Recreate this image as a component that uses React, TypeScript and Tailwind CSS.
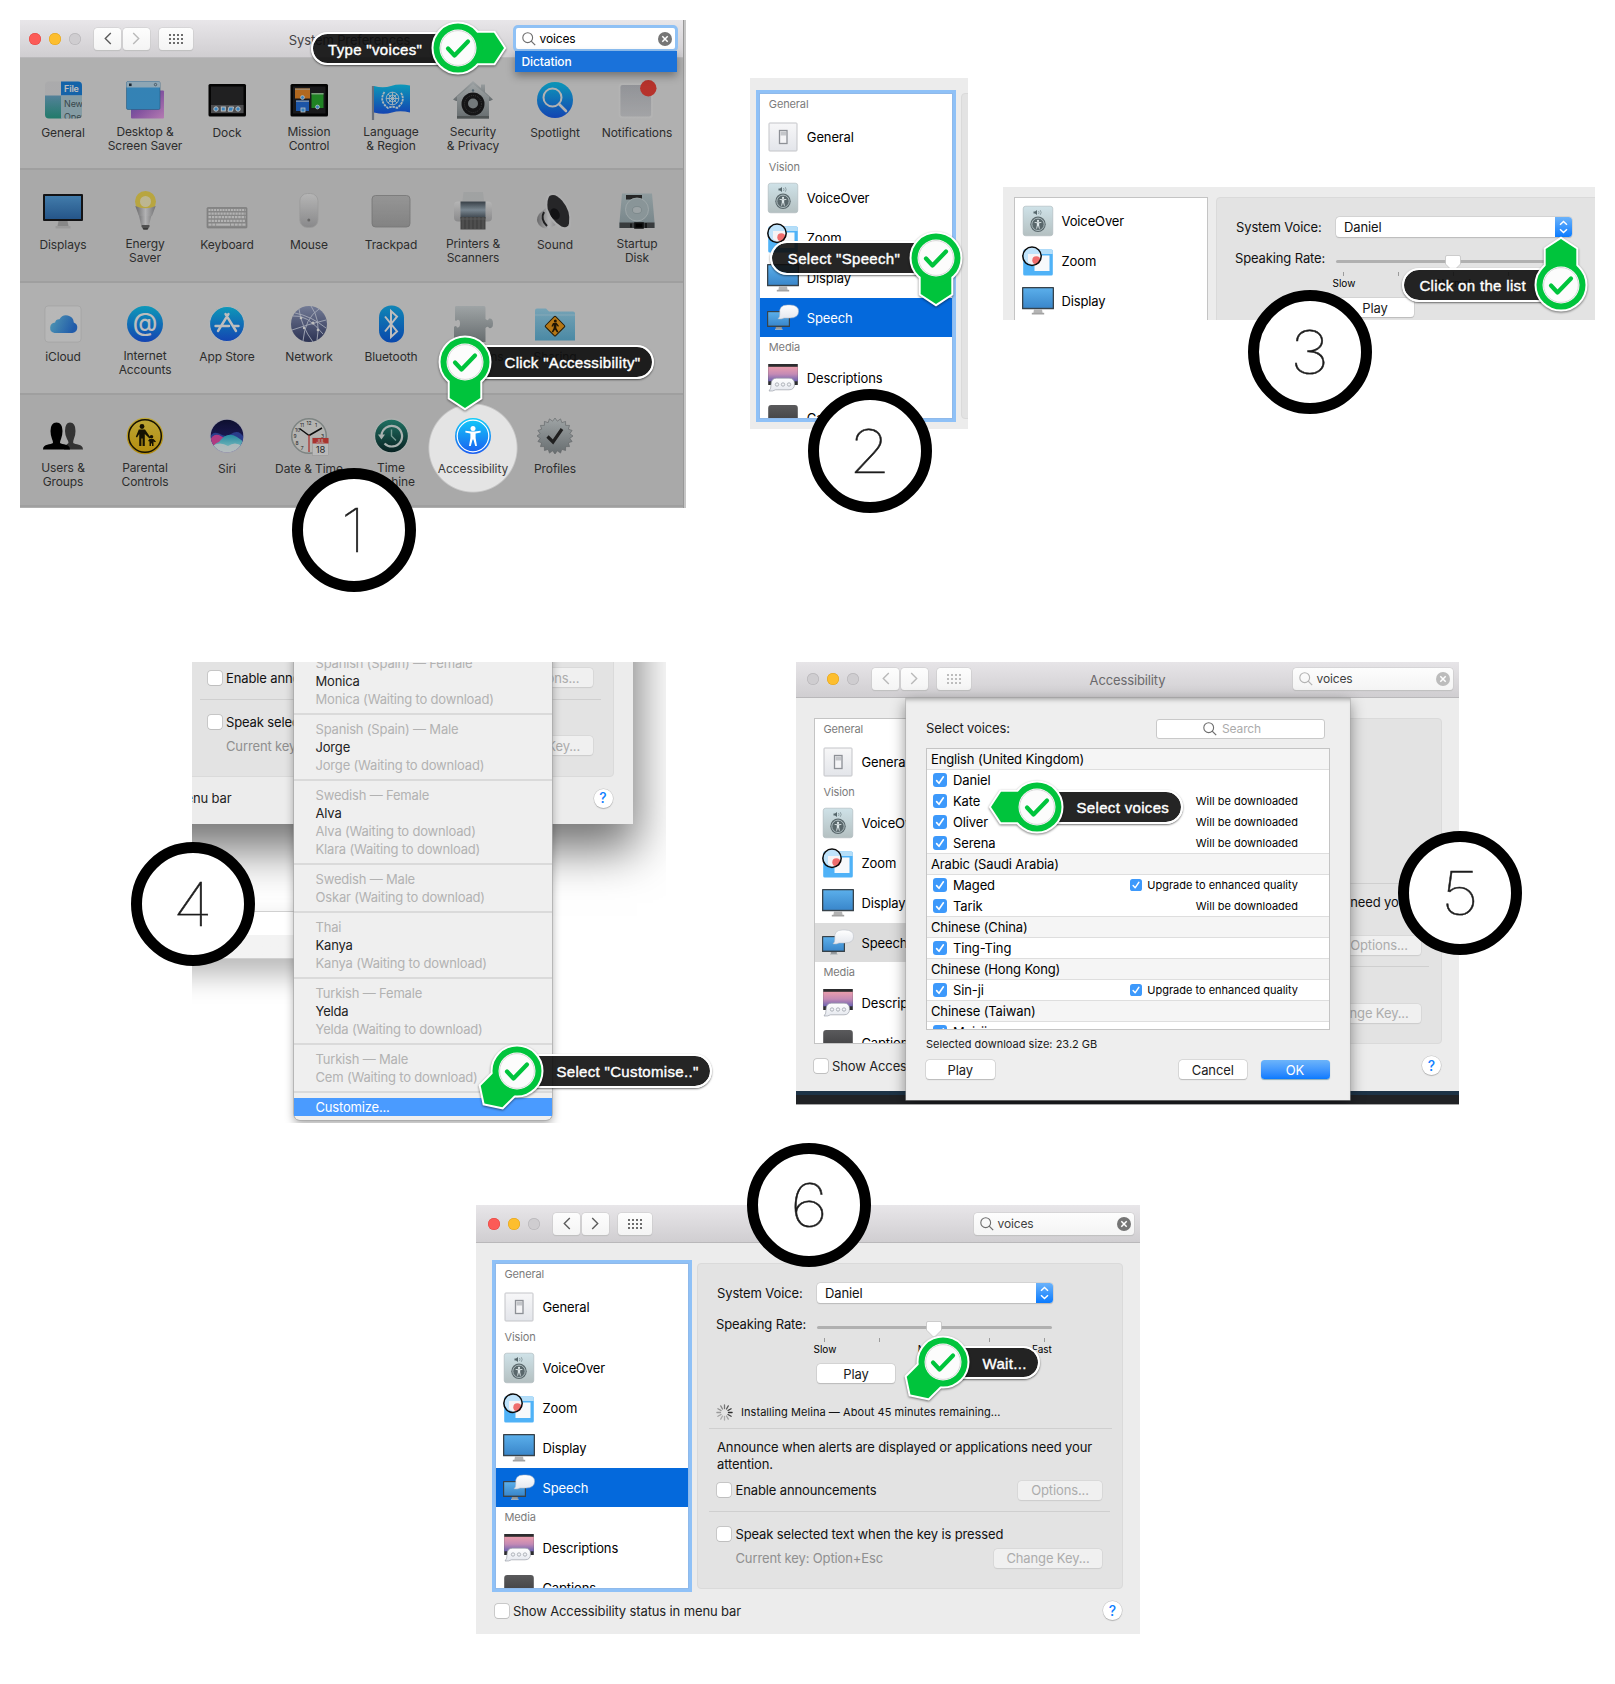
import React from "react";
import type { ReactNode } from "react";

/* ------------------------------------------------------------------ */
/* Shared gradients                                                    */
/* ------------------------------------------------------------------ */

function Grad({ id, stops, x2 = 0, y2 = 1 }: { id: string; stops: string[]; x2?: number; y2?: number }) {
  return (
    <linearGradient id={id} x1="0" y1="0" x2={x2} y2={y2}>
      {stops.map((s, i) => (
        <stop key={i} offset={i / (stops.length - 1)} stopColor={s} />
      ))}
    </linearGradient>
  );
}

function Defs() {
  return (
    <svg width="0" height="0" className="absolute">
      <defs>
        <Grad id="screen" stops={["#5aaeea", "#3a87cb"]} />
        <Grad id="screenDark" stops={["#58a6e6", "#3273b8"]} />
        <Grad id="switch" stops={["#f7f7f8", "#e3e5ea"]} />
        <Grad id="vo" stops={["#cfe2e8", "#b4c0c1"]} />
        <Grad id="sky" stops={["#a9dcfb", "#3fa9f5"]} />
        <Grad id="sunset" stops={["#ea9dac", "#c58bb5", "#6b62b0"]} />
        <Grad id="bubble" stops={["#ffffff", "#e4e7ee"]} />
        <Grad id="cap" stops={["#5a5a5c", "#333335"]} />
        <Grad id="aqua" stops={["#12cdf9", "#1a5cf0"]} />
        <Grad id="blue" stops={["#16b4f5", "#0d61e8"]} />
        <Grad id="teal" stops={["#71aecf", "#2aa58c"]} />
        <Grad id="purple" stops={["#5a63c9", "#b06fd6", "#f3a6f0"]} x2={1} />
        <Grad id="steel" stops={["#d6dddf", "#8b9396"]} />
        <Grad id="silver" stops={["#f4f4f4", "#b9b9bb"]} />
        <Grad id="metal" stops={["#8d8d8f", "#f0f0f2", "#9b9b9d"]} x2={1} y2={0} />
        <Grad id="printer" stops={["#4b5660", "#a3b4c2", "#4b5660"]} />
        <Grad id="disk" stops={["#c1d2d6", "#9fb2b8"]} />
        <Grad id="cloud" stops={["#6fd0f2", "#2c7be5"]} x2={1} y2={0.3} />
        <Grad id="net" stops={["#9aa5c9", "#3b4470"]} />
        <Grad id="folder" stops={["#9fdcf5", "#64b9de"]} />
        <Grad id="yellow" stops={["#ffe14a", "#f3bd10"]} />
        <Grad id="siri" stops={["#0e1236", "#22206a", "#7a3cc4"]} />
        <Grad id="siriWave" stops={["#31b7d8", "#7fe6f2", "#f4ffff"]} />
        <Grad id="tm" stops={["#2b9a86", "#0b2b2c"]} />
        <Grad id="pad" stops={["#c9c9c9", "#b0b0b0"]} />
        <Grad id="notif" stops={["#c4c6cc", "#dcdde0"]} />
        <Grad id="stepper" stops={["#6cb3fa", "#0a7bff"]} />
      </defs>
    </svg>
  );
}

function Icon({ size = 40, box = 40, children }: { size?: number; box?: number; children: ReactNode }) {
  return (
    <svg width={size} height={size} viewBox={`0 0 ${box} ${box}`} className="block shrink-0 overflow-visible">
      {children}
    </svg>
  );
}

function Person({ fill = "#fff" }: { fill?: string }) {
  return (
    <g fill={fill}>
      <circle cx="0" cy="-7.6" r="2.5" />
      <path d="M-7.6 -5.2 L-1.6 -4.4 H1.6 L7.6 -5.2 V-3.4 L2.6 -2.4 V2 L4 10 H2.2 L0.4 3.4 H-0.4 L-2.2 10 H-4 L-2.6 2 V-2.4 L-7.6 -3.4 Z" />
    </g>
  );
}

/* ------------------------------------------------------------------ */
/* Icons of the System Preferences grid                                */
/* ------------------------------------------------------------------ */

const GeneralIcon = () => (
  <Icon>
    <clipPath id="genClip"><rect x="2" y="1.5" width="37" height="37" rx="4" /></clipPath>
    <g clipPath="url(#genClip)">
      <rect x="2" y="1" width="16.500" height="15" fill="#e6e6e8" />
      <rect x="2" y="15.500" width="16.500" height="24" fill="url(#teal)" />
      <rect x="18" y="1" width="22" height="14.500" fill="#1b86e4" />
      <rect x="18" y="15.500" width="22" height="24" fill="#b3d2dd" />
      <text x="21" y="12.400" fontSize="9" fontFamily="Inter, sans-serif" fontWeight="600" fill="#fff">File</text>
      <text x="21" y="27" fontSize="9" fontFamily="Inter, sans-serif" fill="#4d5f66">New</text>
      <text x="21" y="39.500" fontSize="9" fontFamily="Inter, sans-serif" fill="#4d5f66">Open</text>
    </g>
  </Icon>
);

const DesktopIcon = () => (
  <Icon>
    <rect x="6" y="10.500" width="33" height="28" rx="1" fill="url(#purple)" />
    <rect x="1.500" y="1.500" width="33.500" height="28" rx="1.500" fill="#46b0f4" stroke="#3279ac" strokeWidth=".6" />
    <path d="M1.500 7.500 V3 Q1.500 1.500 3 1.500 H33.500 Q35 1.500 35 3 V7.500 Z" fill="#bfe0f3" />
    <rect x="4" y="3.500" width="2.600" height="2.600" fill="#234" />
    <circle cx="30.500" cy="4.600" r="1.200" fill="none" stroke="#456" strokeWidth=".7" />
  </Icon>
);

const DockIcon = () => (
  <Icon>
    <rect x="1.500" y="4" width="37.500" height="32.500" rx="1.500" fill="#050505" />
    <rect x="4" y="6.500" width="32.500" height="27" fill="#2b2b2c" />
    <rect x="4" y="25" width="32.500" height="8" fill="#68686a" />
    <circle cx="9" cy="29" r="2.200" fill="#4db1ff" stroke="#fff" strokeWidth="1" />
    <rect x="14.300" y="27" width="4" height="4" fill="#4db1ff" stroke="#fff" strokeWidth="1" />
    <path d="M22 27 h4.500 l-1 4.200 h-4.500 Z" fill="#4db1ff" stroke="#fff" strokeWidth="1" />
    <circle cx="31" cy="29" r="2.200" fill="#4db1ff" stroke="#fff" strokeWidth="1" />
  </Icon>
);

const MissionIcon = () => (
  <Icon>
    <rect x="1.500" y="4" width="37.500" height="32.500" rx="1.500" fill="#050505" />
    <rect x="4" y="6.500" width="32.500" height="27" fill="#222224" />
    <rect x="6" y="8.500" width="15" height="10" fill="#ee8c2a" />
    <rect x="6" y="8.500" width="15" height="1.500" fill="#d8b58c" />
    <rect x="22.500" y="13" width="12" height="15" fill="#2bb030" />
    <rect x="22.500" y="13" width="12" height="1.500" fill="#a7d6a9" />
    <rect x="7" y="20.500" width="13" height="10.500" fill="#2572e0" />
    <rect x="7" y="20.500" width="13" height="1.500" fill="#9dbde8" />
    <circle cx="13.500" cy="17.500" r="1.900" fill="#4db1ff" stroke="#fff" strokeWidth=".8" />
    <circle cx="28.500" cy="27" r="1.900" fill="#4db1ff" stroke="#fff" strokeWidth=".8" />
    <rect x="12" y="28" width="4" height="4" fill="#4db1ff" stroke="#fff" strokeWidth=".8" />
  </Icon>
);

const LanguageIcon = () => (
  <Icon>
    <path d="M2 6 V40" stroke="#8d97a8" strokeWidth="2.200" />
    <path d="M3 6 Q12 8.500 20 6 T39 5.500 V32.500 Q29 30 21 32.500 T3 32.500 Z" fill="url(#aqua)" />
    <g fill="none" stroke="#e4f5fc" strokeWidth=".9">
      <circle cx="21.500" cy="18.500" r="6.300" /><circle cx="21.500" cy="18.500" r="3.500" />
      <path d="M15.200 18.500 h12.600 M21.500 12.200 v12.600 M17 14 l9 9 M26 14 l-9 9" />
      <path d="M13.500 12 Q7.500 21 17 28 Q21.500 25.500 26 28 Q35.500 21 29.500 12" strokeWidth="1.800" strokeDasharray="2.500 .8" />
    </g>
  </Icon>
);

const SecurityIcon = () => (
  <Icon>
    <path d="M20 1 L28 8 V4.500 H32 V12 L40 19.500 L37 21 H3 L0 19.500 Z" fill="url(#steel)" />
    <path d="M4 16.500 L20 4 L36 16.500 V38.500 H4 Z" fill="url(#steel)" />
    <rect x="4" y="36" width="32" height="2.500" fill="#6b7172" />
    <circle cx="20" cy="24" r="11.500" fill="#1c1c1e" />
    <circle cx="20" cy="24" r="8.500" fill="none" stroke="#555" strokeWidth="1" strokeDasharray=".8 1.200" />
    <circle cx="20" cy="23.500" r="5" fill="#9ba3a6" />
    <circle cx="20" cy="10.500" r="1.200" fill="#6e8490" />
  </Icon>
);

const SpotlightIcon = () => (
  <Icon>
    <circle cx="20" cy="20" r="18" fill="url(#aqua)" />
    <circle cx="17.500" cy="17.500" r="9" fill="none" stroke="#f0f0f0" strokeWidth="2" />
    <path d="M24 24 L31 31" stroke="#f0f0f0" strokeWidth="2.600" strokeLinecap="round" />
  </Icon>
);

const NotificationsIcon = () => (
  <Icon>
    <rect x="2.500" y="4" width="32.500" height="33.500" rx="3" fill="url(#notif)" stroke="#f2f2f2" strokeWidth="1.800" />
    <circle cx="31.300" cy="8.300" r="8.200" fill="#f6443b" />
  </Icon>
);

const DisplaysIcon = () => (
  <Icon>
    <rect x="0" y="2" width="40" height="27" rx="1" fill="#1a1a1c" />
    <rect x="2" y="4" width="36" height="23" fill="url(#screenDark)" />
    <path d="M15.500 29 H24.500 L25.500 34 H14.500 Z" fill="#b6b6b6" />
    <rect x="12.500" y="34" width="15" height="2.500" fill="#d0d0d0" />
  </Icon>
);

const EnergyIcon = () => (
  <Icon>
    <path d="M12 14 L16 33 H24 L29 14 Z" fill="url(#metal)" />
    <circle cx="20.500" cy="9.500" r="10.500" fill="#f8df56" />
    <circle cx="20.500" cy="9.500" r="5.500" fill="#fff6c4" />
    <path d="M10.300 14 Q20.500 18.500 30.700 14 L27 24 H14 Z" fill="url(#metal)" />
    <rect x="16.500" y="33" width="8" height="2.200" fill="#6d6d6d" />
    <path d="M17 35.200 h7 l-1.500 2.600 h-4 Z" fill="#4c4c4c" />
  </Icon>
);

const KeyboardIcon = () => (
  <Icon>
    <rect x="0" y="15.500" width="40" height="20.500" rx="1" fill="#b5b5b5" stroke="#a0a0a0" strokeWidth=".6" />
    <g stroke="#f2f2f2" strokeWidth="2.200">
      <path d="M1.500 18 H38.500" strokeDasharray="2 .8" />
      <path d="M1.500 21.600 H38.500" strokeDasharray="2.200 .8" />
      <path d="M1.500 25.200 H38.500" strokeDasharray="2.500 .8" />
      <path d="M1.500 28.800 H38.500" strokeDasharray="2.300 .8" />
      <path d="M1.500 32.600 H38.500" strokeDasharray="3 .8 3 .8 14 .8 3 .8" />
    </g>
  </Icon>
);

const MouseIcon = () => (
  <Icon>
    <rect x="10.800" y="1.500" width="18.200" height="34" rx="7.500" fill="url(#silver)" stroke="#cfcfcf" strokeWidth=".8" />
    <circle cx="19.800" cy="28" r="1.500" fill="#8a8a8a" />
  </Icon>
);

const TrackpadIcon = () => (
  <Icon>
    <rect x="1" y="3.500" width="38" height="31.500" rx="3.500" fill="url(#pad)" stroke="#9c9c9c" strokeWidth=".8" />
  </Icon>
);

const PrintersIcon = () => (
  <Icon>
    <path d="M10.500 0 H30 L31.500 12 H9 Z" fill="#d8dadb" />
    <rect x="1" y="9.500" width="38" height="20" rx="4" fill="url(#silver)" />
    <rect x="7.500" y="9.500" width="25" height="17" fill="url(#printer)" />
    <rect x="7.500" y="25" width="25" height="12.500" fill="#5c5c5c" />
    <path d="M8 27 H32 M10 25 V37 M14 25 V37 M18 25 V37 M22 25 V37 M26 25 V37 M30 25 V37" stroke="#7d7d7d" strokeWidth=".8" />
  </Icon>
);

const SoundIcon = () => (
  <Icon>
    <path d="M4 22 Q0 28 4 33 Q9 38 15 36 L26 30 L13 14 Z" fill="url(#metal)" />
    <path d="M9 20 Q5 27 12 34" fill="none" stroke="#2b2b2d" strokeWidth="2" />
    <path d="M13 2 Q20 -2 28 7 Q38 19 36 33 Q35 40 27 37 Q16 32 11 18 Q9 7 13 2 Z" fill="#e9e9ea" />
    <path d="M14.500 4 Q20 0.500 27 8.500 Q36 19 34 31.500 Q32.500 37 26.500 34.500 Q17 29 12.700 17 Q11.500 8 14.500 4 Z" fill="#333336" />
    <ellipse cx="20" cy="22" rx="4.500" ry="6" transform="rotate(-28 20 22)" fill="#17171a" />
  </Icon>
);

const DiskIcon = () => (
  <Icon>
    <path d="M5 1.500 H35 L37.500 30 V36 H2.500 V30 Z" fill="url(#disk)" />
    <rect x="2.500" y="30.500" width="35" height="5.500" fill="#4b5052" />
    <rect x="9" y="3" width="16" height="4.500" fill="#333" />
    <circle cx="20" cy="17.500" r="11.500" fill="#b9c9cd" stroke="#dbe6e8" strokeWidth=".8" />
    <ellipse cx="20" cy="18" rx="4.500" ry="3.500" fill="#d2dcdf" stroke="#8fa0a5" strokeWidth=".5" />
    <path d="M14 31.500 v4 M18 31 h8 v5 h-8z M29 31 v5" stroke="#131414" strokeWidth="1.600" />
  </Icon>
);

const ICloudIcon = () => (
  <Icon>
    <rect x="2" y="2" width="36" height="36" rx="3" fill="#f7f7f7" stroke="#cfcfcf" strokeWidth=".5" />
    <path d="M11.500 29 a5.300 5.300 0 0 1 .6 -10.500 a4.200 4.200 0 0 1 4.400 -3.300 a7.700 7.700 0 0 1 14.300 3.200 a5.500 5.500 0 0 1 -1.600 10.600 Z" fill="url(#cloud)" />
  </Icon>
);

const InternetIcon = () => (
  <Icon>
    <circle cx="20" cy="20" r="18" fill="url(#aqua)" />
    <text x="20" y="27.300" textAnchor="middle" fontSize="25" fontFamily="Inter, sans-serif" fontWeight="500" fill="#fff">@</text>
  </Icon>
);

const AppStoreIcon = () => (
  <Icon>
    <circle cx="20" cy="20" r="17.500" fill="url(#aqua)" stroke="#eef3f7" strokeWidth="1.200" />
    <g stroke="#fff" strokeWidth="2.400" strokeLinecap="round">
      <path d="M21.500 10 L11 27 M18.500 10 L29 27 M8.500 22 H22 M26.500 22 H31.500" />
    </g>
  </Icon>
);

const NetworkIcon = () => (
  <Icon>
    <circle cx="20" cy="20" r="18" fill="url(#net)" />
    <g fill="none" stroke="#dfe5f7" strokeWidth=".9">
      <path d="M4 12 Q18 10 34 30 M10 5 Q12 22 24 38 M30 5 Q16 14 14 37 M3 26 Q20 20 37 16 M6 9 Q22 12 37 24 M22 2 Q32 16 28 36" />
    </g>
    <g fill="#fff">
      <circle cx="12" cy="14" r="1.300" /><circle cx="24" cy="19" r="1.500" /><circle cx="15" cy="24" r="1.200" /><circle cx="29" cy="26" r="1.300" />
    </g>
  </Icon>
);

const BluetoothIcon = () => (
  <Icon>
    <rect x="8" y="1.500" width="25" height="37" rx="12" fill="url(#blue)" />
    <path d="M14 12.500 L26 27.500 L20 33 V7 L26 12.500 L14 27.500" fill="none" stroke="#fff" strokeWidth="2" />
  </Icon>
);

const ExtensionsIcon = () => (
  <Icon>
    <path d="M2 3 Q2 2 3.500 2 H31 Q32.500 2 32.500 4 V15 Q35 17.500 36 14.500 Q40 14 40 19.500 Q40 25 36 24 Q35 21.500 32.500 24 V38 H1 V23 Q3 21 4 23.500 Q7 24 7 19.500 Q7 15 4 16 Q3 18 2 16 Z" fill="url(#steel)" />
  </Icon>
);

const SharingIcon = () => (
  <Icon>
    <path d="M0 6.500 Q0 4.500 2 4.500 H11 L14 7.500 H38 Q40 7.500 40 9.500 V36.500 H0 Z" fill="url(#folder)" />
    <path d="M0 11 H40" stroke="#bfe9fa" strokeWidth=".8" />
    <rect x="12.800" y="15" width="14.400" height="14.400" rx="1" transform="rotate(45 20 22.200)" fill="#f5a11c" stroke="#33240a" strokeWidth="1" />
    <g fill="#2a1c05">
      <circle cx="20.300" cy="17" r="1.500" />
      <path d="M18 19 L21.500 18.700 L24 22 L23 22.700 L21.500 21 L21.300 24 L23.500 28 L22 28.500 L20 25.500 L18 28.500 L16.800 27.700 L18.700 24 V21 L17.500 22.800 L16.400 22.200 Z" />
    </g>
  </Icon>
);

const UsersIcon = () => (
  <Icon>
    <path d="M21 33.500 C22 29 24 28.500 25.500 27 Q25.500 25 24 23 Q22 19 22 15 Q22 6.500 27 6.500 Q32.500 6.500 32.500 15 Q32.500 19 31 22.500 Q30 25 30.200 27 C32 29 40 27.500 40 33.500 Z" fill="#454545" />
    <path d="M0 33.500 C0 27.500 8 29 10 27 Q10 25 9 23 Q7.500 19 7.500 15 Q7.500 6.500 13.500 6.500 Q19.500 6.500 19.500 15 Q19.500 19 18 23 Q17 25 17 27 C19 29 27 27.500 27 33.500 Z" fill="#000" />
  </Icon>
);

const ParentalIcon = () => (
  <Icon>
    <circle cx="20" cy="20" r="18.300" fill="url(#yellow)" />
    <circle cx="20" cy="20" r="16.300" fill="none" stroke="#1e1803" strokeWidth="1.500" />
    <g fill="#1e1803">
      <circle cx="17" cy="10.500" r="2.400" />
      <path d="M13.800 13.500 H20 L25.500 21.500 L24.500 22.500 L19.800 18 V30 H17.600 V22.500 H16.400 V30 H14.200 V18 L12 21.500 L10.800 20.700 Z" />
      <circle cx="26.500" cy="20.800" r="1.800" />
      <path d="M24.500 23 H28.500 L31 25.500 L30 26.300 L28.500 25.500 V30 H27 V27.500 H26 V30 H24.500 V25.500 L23 25 Z" />
    </g>
  </Icon>
);

const SiriIcon = () => (
  <Icon>
    <clipPath id="siriClip"><circle cx="20" cy="20" r="16.300" /></clipPath>
    <circle cx="20" cy="20" r="17.300" fill="#dcdcea" />
    <g clipPath="url(#siriClip)">
      <rect width="40" height="40" fill="url(#siri)" />
      <path d="M2 25 Q4 14 12 17.500 Q19 22 24 18 Q33 12 38 24 V30 H2 Z" fill="#3f5fd0" opacity=".8" />
      <path d="M2 27 Q5 17 12 19 Q18 22.500 24 26 Q18 30 2 29 Z" fill="#ef4fae" />
      <path d="M12 26 Q20 14.500 30 21 Q35 24 38 28 L34 34 Q20 42 5 32 Q8 27 12 26 Z" fill="url(#siriWave)" />
      <path d="M5 30 Q13 25 21 30 Q28 25 35 30 Q29 38 20 38 Q10 38 5 30 Z" fill="#f3fdff" opacity=".9" />
    </g>
  </Icon>
);

const ClockIcon = () => (
  <Icon>
    <circle cx="20" cy="20" r="17.300" fill="#f2f2ef" stroke="#a9b2b0" strokeWidth="1.600" />
    <g fontSize="5" fontFamily="Inter, sans-serif" fill="#333" textAnchor="middle">
      <text x="20" y="8.500">12</text><text x="27" y="10.500">1</text><text x="13" y="10.500">11</text>
      <text x="8.500" y="15.500">10</text><text x="6" y="22">9</text><text x="8" y="29">8</text><text x="13" y="34">7</text><text x="33.500" y="22">3</text>
    </g>
    <path d="M20 19.500 L10.500 12.500 M20 19.500 L33 12" stroke="#111" strokeWidth="1.500" />
    <path d="M20 19 V36" stroke="#e4453f" strokeWidth="1.300" />
    <rect x="23.500" y="22" width="16" height="17.500" fill="#fafafa" stroke="#bbb" strokeWidth=".4" />
    <rect x="23.500" y="22" width="16" height="5.500" fill="#e4453f" />
    <text x="31.500" y="26.600" fontSize="4.500" textAnchor="middle" fontFamily="Inter, sans-serif" fill="#fff">JUL</text>
    <text x="31.500" y="37" fontSize="9.500" textAnchor="middle" fontFamily="Inter, sans-serif" fill="#333">18</text>
  </Icon>
);

const TimeMachineIcon = () => (
  <Icon>
    <circle cx="20.500" cy="20" r="17" fill="url(#tm)" stroke="#e7ecea" strokeWidth="1.300" />
    <path d="M10.500 19.500 A10.300 10.300 0 1 1 13.500 27.500" fill="none" stroke="#e2efec" strokeWidth="2.200" />
    <path d="M7 18.500 H14 L10.400 23.500 Z" fill="#e2efec" />
    <path d="M20.500 13.500 V20 L25 24.500" fill="none" stroke="#9ccfc4" strokeWidth="1.400" />
  </Icon>
);

const AccessibilityIcon = () => (
  <Icon>
    <circle cx="20" cy="20" r="18" fill="url(#aqua)" />
    <circle cx="20" cy="20" r="15.800" fill="none" stroke="#fff" strokeWidth="1.200" />
    <g transform="translate(20 20)"><Person /></g>
  </Icon>
);

const GEAR = Array.from({ length: 40 }, (_, i) => {
  const r = i % 2 ? 15 : 18;
  const a = (i * Math.PI) / 20;
  return `${(20 + r * Math.sin(a)).toFixed(2)},${(20 - r * Math.cos(a)).toFixed(2)}`;
}).join(" ");

const ProfilesIcon = () => (
  <Icon>
    <polygon points={GEAR} fill="url(#steel)" stroke="#7c8285" strokeWidth=".6" />
    <path d="M12.500 20.500 L18 26 L27 13" fill="none" stroke="#2a2a2a" strokeWidth="3.200" />
  </Icon>
);

const PREFERENCES: { icon: () => React.JSX.Element; lines: string[] }[][] = [
  [
    { icon: GeneralIcon, lines: ["General"] },
    { icon: DesktopIcon, lines: ["Desktop &", "Screen Saver"] },
    { icon: DockIcon, lines: ["Dock"] },
    { icon: MissionIcon, lines: ["Mission", "Control"] },
    { icon: LanguageIcon, lines: ["Language", "& Region"] },
    { icon: SecurityIcon, lines: ["Security", "& Privacy"] },
    { icon: SpotlightIcon, lines: ["Spotlight"] },
    { icon: NotificationsIcon, lines: ["Notifications"] },
  ],
  [
    { icon: DisplaysIcon, lines: ["Displays"] },
    { icon: EnergyIcon, lines: ["Energy", "Saver"] },
    { icon: KeyboardIcon, lines: ["Keyboard"] },
    { icon: MouseIcon, lines: ["Mouse"] },
    { icon: TrackpadIcon, lines: ["Trackpad"] },
    { icon: PrintersIcon, lines: ["Printers &", "Scanners"] },
    { icon: SoundIcon, lines: ["Sound"] },
    { icon: DiskIcon, lines: ["Startup", "Disk"] },
  ],
  [
    { icon: ICloudIcon, lines: ["iCloud"] },
    { icon: InternetIcon, lines: ["Internet", "Accounts"] },
    { icon: AppStoreIcon, lines: ["App Store"] },
    { icon: NetworkIcon, lines: ["Network"] },
    { icon: BluetoothIcon, lines: ["Bluetooth"] },
    { icon: ExtensionsIcon, lines: ["Extensions"] },
    { icon: SharingIcon, lines: ["Sharing"] },
  ],
  [
    { icon: UsersIcon, lines: ["Users &", "Groups"] },
    { icon: ParentalIcon, lines: ["Parental", "Controls"] },
    { icon: SiriIcon, lines: ["Siri"] },
    { icon: ClockIcon, lines: ["Date & Time"] },
    { icon: TimeMachineIcon, lines: ["Time", "Machine"] },
    { icon: AccessibilityIcon, lines: ["Accessibility"] },
    { icon: ProfilesIcon, lines: ["Profiles"] },
  ],
];

/* ------------------------------------------------------------------ */
/* Icons of the Accessibility sidebar                                  */
/* ------------------------------------------------------------------ */

const SwitchIcon = () => (
  <Icon size={32} box={32}>
    <rect x="2" y="2" width="28" height="28" rx=".8" fill="url(#switch)" stroke="#c3c4c8" strokeWidth="1" />
    <rect x="12.500" y="9.500" width="7.500" height="13" fill="#f4f4f6" stroke="#8d9096" strokeWidth="1.300" />
    <rect x="13.500" y="10.500" width="5.500" height="4" fill="#c4c6ca" />
  </Icon>
);

const VoiceOverIcon = () => (
  <Icon size={32} box={32}>
    <rect x="1.200" y="1.200" width="29.600" height="29.600" rx="2.500" fill="url(#vo)" stroke="#a9b6b9" strokeWidth=".6" />
    <path d="M11.500 6.500 H13 L15 5 V10 L13 8.500 H11.500 Z" fill="#55666b" />
    <path d="M16.500 6 Q17.500 7.500 16.500 9 M18.300 5.200 Q20 7.500 18.300 9.800" fill="none" stroke="#7f9095" strokeWidth=".8" />
    <circle cx="16" cy="19.300" r="7.700" fill="#59676b" />
    <circle cx="16" cy="19.300" r="6.200" fill="none" stroke="#b8c6ca" strokeWidth=".9" />
    <g transform="translate(16 19.300) scale(.45)"><Person fill="#dfe8ea" /></g>
  </Icon>
);

const ZoomIcon = () => (
  <Icon size={32} box={32}>
    <rect x="1.200" y="4.500" width="29.600" height="26" rx="1.500" fill="#4fb2f7" />
    <path d="M1.200 9 V6 Q1.200 4.500 2.700 4.500 H29.300 Q30.800 4.500 30.800 6 V9 Z" fill="#b5def8" />
    <rect x="12.500" y="10.500" width="15" height="15.500" fill="#f7f9fb" />
    <circle cx="10.500" cy="11.500" r="9" fill="#bfe3fb" />
    <path d="M6 9 H19 Q19.500 20 11 20 L6 17 Z" fill="#f6f3f5" />
    <circle cx="14.300" cy="15.200" r="4" fill="#ef6d6d" />
    <circle cx="10" cy="11.300" r="9.200" fill="none" stroke="#0b0b0b" strokeWidth="1.500" />
  </Icon>
);

const DisplayIcon = () => (
  <Icon size={32} box={32}>
    <rect x="0" y="2" width="32" height="22.300" rx=".6" fill="#37424a" />
    <rect x="1.300" y="3.300" width="29.400" height="19.500" fill="url(#screen)" />
    <path d="M12 24.300 H20 L20.600 28 H11.400 Z" fill="#b4b4b4" />
    <rect x="9.800" y="27.800" width="12.400" height="1.700" fill="#a3a3a3" />
  </Icon>
);

const SpeechIcon = () => (
  <Icon size={32} box={32}>
    <rect x="0" y="9" width="23" height="16" rx=".5" fill="#37424a" />
    <rect x="1.200" y="10.200" width="20.600" height="13.400" fill="url(#screen)" />
    <rect x="8.800" y="25" width="6" height="2" fill="#8f9497" />
    <rect x="8" y="26.800" width="7.600" height="1" fill="#b9bdc0" />
    <path d="M20.500 3 H23 Q31.500 3 31.500 9.500 Q31.500 16 23 16 H17 Q14.500 17.500 11 16.800 Q13 15.300 12.800 12 Q11.500 3 20.500 3 Z" fill="url(#bubble)" stroke="#b4bac4" strokeWidth=".5" />
  </Icon>
);

const DescriptionsIcon = () => (
  <Icon size={32} box={32}>
    <rect x="1.200" y="2" width="29.600" height="21" fill="#2c2c2e" />
    <rect x="1.200" y="4.800" width="29.600" height="14.500" fill="url(#sunset)" />
    <path d="M9.500 16.200 H22 Q27.500 16.200 27.500 22 Q27.500 27.800 22 27.800 H8.500 Q6 29.500 2 29 Q4.300 26.500 4 23 Q4 16.200 9.500 16.200 Z" fill="url(#bubble)" stroke="#9ea2ab" strokeWidth=".7" />
    <g fill="none" stroke="#a7abb3" strokeWidth=".9">
      <circle cx="10" cy="22.500" r="1.700" /><circle cx="16" cy="22.500" r="1.700" /><circle cx="22" cy="22.500" r="1.700" />
    </g>
  </Icon>
);

const CaptionsIcon = () => (
  <Icon size={32} box={32}>
    <rect x="1.200" y="3" width="29.600" height="27" rx="3" fill="url(#cap)" />
  </Icon>
);

/* ------------------------------------------------------------------ */
/* Window chrome and controls                                          */
/* ------------------------------------------------------------------ */

function Magnifier({ dim = false }: { dim?: boolean }) {
  return (
    <svg width="14" height="14" viewBox="0 0 14 14" className={dim ? "shrink-0 text-[#b3b3b3]" : "shrink-0 text-[#6d6d6d]"}>
      <circle cx="5.700" cy="5.700" r="4.900" fill="none" stroke="currentColor" strokeWidth="1.100" />
      <path d="M9.200 9.200 L13.200 13.200" stroke="currentColor" strokeWidth="1.200" />
    </svg>
  );
}

function NavButton({ dir, dim }: { dir: "back" | "forward"; dim: boolean }) {
  return (
    <span className="flex h-[22px] w-[27px] items-center justify-center rounded-[3.500px] bg-gradient-to-b from-[#fdfdfd] to-[#f4f4f4] shadow-[0_0_0_.5px_#c9c9c9,0_1px_1px_#b5b5b5]">
      <svg width="8" height="13" viewBox="0 0 8 13" className={dim ? "text-[#b9b9b9]" : "text-[#5c5c5c]"}>
        <path d={dir === "back" ? "M6.800 1 L1.300 6.500 L6.800 12" : "M1.200 1 L6.700 6.500 L1.200 12"} fill="none" stroke="currentColor" strokeWidth="1.400" />
      </svg>
    </span>
  );
}

function TitleBar({ title, inactive = false, forwardDim = false, focused = false }: { title?: string; inactive?: boolean; forwardDim?: boolean; focused?: boolean }) {
  return (
    <div className="relative flex h-[38px] items-center border-b border-[#b9b8ba] bg-gradient-to-b from-[#e8e6e9] to-[#d0ced1] pl-[12px] pr-[8px]">
      <div className="flex gap-2">
        <i className={inactive ? "size-3 rounded-full bg-[#cfcdd0] shadow-[inset_0_0_0_.7px_#b9b7ba]" : "size-3 rounded-full bg-[#fc5b57] shadow-[inset_0_0_0_.5px_#e2443f]"} />
        <i className="size-3 rounded-full bg-[#fdbe2e] shadow-[inset_0_0_0_.5px_#e0a019]" />
        <i className="size-3 rounded-full bg-[#cfcdd0] shadow-[inset_0_0_0_.7px_#b9b7ba]" />
      </div>
      <div className="ml-[13px] flex gap-[1.500px]">
        <NavButton dir="back" dim={inactive} />
        <NavButton dir="forward" dim={inactive || forwardDim} />
      </div>
      <span className="ml-[9.500px] flex h-[22px] w-[34px] items-center justify-center rounded-[3.500px] bg-gradient-to-b from-[#fdfdfd] to-[#f4f4f4] shadow-[0_0_0_.5px_#c9c9c9,0_1px_1px_#b5b5b5]">
        <span className="grid grid-cols-4 gap-x-[2.200px] gap-y-[2px]">
          {Array.from({ length: 12 }, (_, i) => (
            <i key={i} className={inactive ? "size-[2px] bg-[#bdbdbd]" : "size-[2px] bg-[#6c6c6c]"} />
          ))}
        </span>
      </span>
      {title && (
        <span className={inactive ? "absolute left-0 top-[11px] w-[665px] text-center leading-[18px] text-[#6a696b]" : "absolute left-0 top-[11px] w-[665px] text-center leading-[18px] text-[#434244]"}>{title}</span>
      )}
      <div
        className={
          focused
            ? "relative ml-auto flex h-[21px] w-[159px] items-center rounded-[2px] bg-white pl-[6px] pr-[3px] text-[12px] text-black shadow-[0_0_0_3px_#8fc1f5]"
            : "relative ml-auto flex h-[22px] w-[160px] items-center rounded-[3.500px] bg-gradient-to-b from-[#fdfdfd] to-[#f4f4f4] pl-[6px] pr-[3px] text-[12px] text-[#3f3f3f] shadow-[0_0_0_.5px_#c9c9c9,0_1px_1px_#b5b5b5]"
        }
      >
        <Magnifier dim={inactive} />
        <span className="ml-[3.500px]">voices</span>
        <svg width="14" height="14" viewBox="0 0 14 14" className={inactive ? "ml-auto text-[#bcbcbc]" : "ml-auto text-[#757575]"}>
          <circle cx="7" cy="7" r="7" fill="currentColor" />
          <path d="M4.300 4.300 L9.700 9.700 M9.700 4.300 L4.300 9.700" stroke="#fff" strokeWidth="1.500" />
        </svg>
      </div>
    </div>
  );
}

function Checkbox({ checked = false, small = false }: { checked?: boolean; small?: boolean }) {
  if (!checked) return <i className="size-[14px] shrink-0 rounded-[3px] bg-white shadow-[0_0_0_.7px_#bdbdbd,0_.5px_.5px_#aaa]" />;
  return (
    <svg viewBox="0 0 14 14" className={small ? "size-[12px] shrink-0" : "size-[14px] shrink-0"}>
      <rect width="14" height="14" rx="3" fill="#3d99fb" />
      <path d="M3.600 7.600 L6 10.300 L10.400 3.800" fill="none" stroke="#fff" strokeWidth="1.600" strokeLinecap="round" strokeLinejoin="round" />
    </svg>
  );
}

function Button({ children, className }: { children: ReactNode; className: string }) {
  return (
    <span className={`flex h-[19px] items-center justify-center rounded-[3.500px] ${className}`}>{children}</span>
  );
}

const ENABLED = "bg-white text-[#1b1b1b] shadow-[0_0_0_.5px_#c3c3c3,0_1px_1px_#b4b4b4]";
const DISABLED = "bg-[#f0f0f0] text-[#acacac] shadow-[0_0_0_.5px_#d0d0d0,0_1px_1px_#cacaca]";

/* ------------------------------------------------------------------ */
/* Accessibility window                                                */
/* ------------------------------------------------------------------ */

function SideRow({ icon: I, label, selected = "" }: { icon: () => React.JSX.Element; label: string; selected?: string }) {
  return (
    <div className={`flex h-[39.900px] shrink-0 items-center pl-[7px] ${selected}`}>
      <I />
      <span className="ml-[7.500px]">{label}</span>
    </div>
  );
}

type Variant = "focused" | "plain" | "inactive";
type Pane = "full" | "voice" | "lower" | "empty";

function Sidebar({ variant, scrolled }: { variant: Variant; scrolled: boolean }) {
  const frame =
    variant === "focused"
      ? "border-[#8fb9ea] shadow-[0_0_0_3px_#8fc1f7]"
      : "border-[#c4c4c4]";
  const picked = variant === "inactive" ? "bg-[#dcdcdc]" : "bg-[#0469dc] text-white";
  return (
    <div className={`ml-[19px] flex h-[326px] w-[194px] shrink-0 flex-col overflow-hidden border bg-white text-black ${frame}`}>
      {scrolled ? (
        <div className="h-[3.500px] shrink-0" />
      ) : (
        <>
          <div className="h-[23px] shrink-0 pl-[8.500px] pt-[1px] text-[11px] leading-[18px] text-[#7b7b7b]">General</div>
          <SideRow icon={SwitchIcon} label="General" />
          <div className="h-[21px] shrink-0 pl-[8.500px] text-[11px] leading-[20px] text-[#7b7b7b]">Vision</div>
        </>
      )}
      <SideRow icon={VoiceOverIcon} label="VoiceOver" />
      <SideRow icon={ZoomIcon} label="Zoom" />
      <SideRow icon={DisplayIcon} label="Display" />
      {!scrolled && (
        <>
          <SideRow icon={SpeechIcon} label="Speech" selected={picked} />
          <div className="h-[21px] shrink-0 pl-[8.500px] text-[11px] leading-[21px] text-[#7b7b7b]">Media</div>
          <SideRow icon={DescriptionsIcon} label="Descriptions" />
          <SideRow icon={CaptionsIcon} label="Captions" />
        </>
      )}
    </div>
  );
}

function RateSlider() {
  return (
    <div className="relative flex w-[235px] flex-col">
      <div className="mt-[12px] h-[2.500px] rounded-full bg-[#b0b0b0]" />
      <div className="mt-[9px] flex justify-between px-[7px]">
        {[0, 1, 2, 3, 4].map((t) => (
          <i key={t} className="h-[4px] w-px bg-[#9b9b9b]" />
        ))}
      </div>
      <div className="flex justify-between text-[10px] leading-[14px] text-black">
        <span className="-ml-[3.500px] w-[24px] tracking-normal">Slow</span>
        <span className="tracking-normal">Normal</span>
        <span className="-mr-[2px] w-[22px] tracking-normal">Fast</span>
      </div>
      <svg width="18" height="20" viewBox="0 0 18 20" className="absolute left-[108px] top-[6px]">
        <path d="M3 1.500 H15 Q16.500 1.500 16.500 3 V10 L9.800 16.800 Q9 17.500 8.200 16.800 L1.500 10 V3 Q1.500 1.500 3 1.500 Z" fill="#fff" stroke="#bcbcbc" strokeWidth=".7" />
      </svg>
    </div>
  );
}

function Spinner() {
  return (
    <svg width="17" height="17" viewBox="-8.500 -8.500 17 17" className="shrink-0">
      {[0.6, 0.75, 0.9, 1, 0.85, 0.35, 0.3, 0.3, 0.35, 0.4, 0.45, 0.5].map((o, i) => (
        <path key={i} d="M0 -4 V-7.600" stroke="#2c2c2c" strokeWidth="1.300" strokeLinecap="round" opacity={o} transform={`rotate(${i * 30})`} />
      ))}
    </svg>
  );
}

function VoiceSettings() {
  return (
    <>
      <div className="mt-[19px] flex h-5 items-center">
        <span className="mr-[20px] w-[99px] whitespace-nowrap pl-[19px]">System Voice:</span>
        <div className="flex h-5 w-[235.500px] items-center overflow-hidden rounded-[3.500px] bg-white shadow-[0_0_0_.5px_#c3c3c3,0_1px_1px_#b4b4b4]">
          <span className="ml-2 flex-1">Daniel</span>
          <svg width="17" height="20" viewBox="0 0 17 20">
            <rect width="17" height="20" fill="url(#stepper)" />
            <path d="M5 7.800 L8.500 4.500 L12 7.800 M5 12.200 L8.500 15.500 L12 12.200" fill="none" stroke="#fff" strokeWidth="1.500" />
          </svg>
        </div>
      </div>
      <div className="mt-[11px] flex h-[44px]">
        <span className="mr-[20px] w-[99px] whitespace-nowrap pl-[18px] leading-5">Speaking Rate:</span>
        <RateSlider />
      </div>
      <Button className={`ml-[119px] mt-[6px] w-[78px] ${ENABLED}`}>Play</Button>
    </>
  );
}

function SpeechPane({ pane }: { pane: Pane }) {
  const showVoice = pane === "full" || pane === "voice";
  const showLower = pane === "full" || pane === "lower";
  return (
    <div className="ml-[8px] h-[326px] w-[426px] rounded-[4px] border border-[#dadada] bg-[#e3e3e3] text-[#111]">
      {showVoice && <VoiceSettings />}
      {pane === "full" && (
        <div className="mt-[19px] flex h-5 items-center pl-[18px] text-[11px] tracking-[0.005em]">
          <Spinner />
          <span className="ml-[8px] leading-5">Installing Melina — About 45 minutes remaining...</span>
        </div>
      )}
      {showLower && (
        <>
          <div className={pane === "lower" ? "ml-[11px] mt-[164px] h-px w-[403px] bg-[#cfcfcf]" : "ml-[11px] mt-[6px] h-px w-[403px] bg-[#cfcfcf]"} />
          <p className="mt-[10px] w-[410px] pl-[19px] leading-[17px]">Announce when alerts are displayed or applications need your attention.</p>
          <div className="mt-[7px] flex h-5 items-center pl-[19px] pr-[20px]">
            <Checkbox />
            <span className="ml-[4.500px]">Enable announcements</span>
            <Button className={`ml-auto w-[84px] ${DISABLED}`}>Options...</Button>
          </div>
          <div className="ml-[11px] mt-[11px] h-px w-[401px] bg-[#cfcfcf]" />
          <div className="mt-[12px] flex h-5 items-center pl-[19px]">
            <Checkbox />
            <span className="ml-[4.500px]">Speak selected text when the key is pressed</span>
          </div>
          <div className="mt-1 flex h-5 items-center pl-[37.500px] pr-[20px]">
            <span className="text-[#8f8f8f]">Current key: Option+Esc</span>
            <Button className={`ml-auto w-[108px] ${DISABLED}`}>Change Key...</Button>
          </div>
        </>
      )}
    </div>
  );
}

function AccessibilityWindow({
  variant,
  pane,
  title,
  chrome = true,
  sidebar = true,
  footer = true,
  scrolled = false,
  className = "",
}: {
  variant: Variant;
  pane: Pane;
  title?: string;
  chrome?: boolean;
  sidebar?: boolean;
  footer?: boolean;
  scrolled?: boolean;
  className?: string;
}) {
  return (
    <div className={`flex h-[431px] w-[666px] shrink-0 flex-col bg-[#ececec] ${className}`}>
      {chrome ? <TitleBar title={title} inactive={variant === "inactive"} /> : <div className="h-[38px] shrink-0" />}
      <div className="mt-[20px] flex">
        {sidebar ? <Sidebar variant={variant} scrolled={scrolled} /> : <div className="w-[213px] shrink-0" />}
        <SpeechPane pane={pane} />
      </div>
      {footer && (
        <div className="mt-[11px] flex h-[21px] items-center pl-[19px] pr-[20px] text-[#222]">
          <Checkbox />
          <span className="ml-[4px]">Show Accessibility status in menu bar</span>
          <span className="ml-auto flex size-[19px] items-center justify-center rounded-full bg-white text-[14px] font-medium text-[#0f80ff] shadow-[0_0_0_.5px_#c3c3c3,0_1px_1px_#aaa]">?</span>
        </div>
      )}
    </div>
  );
}

/* ------------------------------------------------------------------ */
/* Annotations                                                         */
/* ------------------------------------------------------------------ */

const PILL_RIGHT =
  "absolute left-0 top-[-16.500px] h-[33.500px] whitespace-nowrap rounded-full border-2 border-white bg-[rgba(13,13,13,.9)] bg-clip-padding pl-[37.500px] pr-[11.500px] shadow-[0_1px_2px_rgba(0,0,0,.55)]";
const PILL_LEFT =
  "absolute right-0 top-[-16.500px] h-[33.500px] whitespace-nowrap rounded-full border-2 border-white bg-[rgba(13,13,13,.9)] bg-clip-padding pl-[15.500px] pr-[33.500px] shadow-[0_1px_2px_rgba(0,0,0,.55)]";

function Callout({ angle, side, className, children }: { angle: number; side: "left" | "right"; className: string; children: ReactNode }) {
  return (
    <div className={`absolute z-20 size-0 ${className}`}>
      <div className={side === "right" ? PILL_RIGHT : PILL_LEFT}>
        <span className="block font-['Liberation_Sans',sans-serif] text-[15px] leading-[31px] tracking-[0.022em] text-white [-webkit-text-stroke:.4px_#fff]">{children}</span>
      </div>
      <svg width="110" height="110" viewBox="-55 -55 110 110" className="absolute left-[-55px] top-[-55px] drop-shadow-[0_1px_1px_rgba(0,0,0,.5)]">
        <g transform={`rotate(${angle})`} fill="#fff" stroke="#fff" strokeWidth="4" strokeLinejoin="miter">
          <path d="M18 -15.300 H36 L46 0 L36 15.300 H18 Z" />
          <circle r="24.500" />
        </g>
        <g transform={`rotate(${angle})`} fill="#00c43c">
          <path d="M10 -15.300 H36 L46 0 L36 15.300 H10 Z" />
          <circle r="24.500" />
        </g>
        <circle r="18.500" fill="#fff" />
        <circle r="17.400" fill="#fcfcfc" stroke="#d2d2d2" strokeWidth=".9" />
        <path d="M-10 0.500 L-3.500 7.500 L10 -6.500" fill="none" stroke="#00c43c" strokeWidth="4.200" strokeLinecap="round" strokeLinejoin="round" />
      </svg>
    </div>
  );
}

function StepNumber({ n, className }: { n: number; className: string }) {
  return (
    <div className={`absolute z-30 flex size-[124px] items-center justify-center rounded-full border-[11px] border-black bg-white font-['Inter',sans-serif] text-[60px] font-thin leading-none tracking-normal text-[#1c1c1c] [-webkit-text-stroke:.45px_#1c1c1c] ${className}`}>
      <span className="scale-x-[1.12]">{n}</span>
    </div>
  );
}

/* ------------------------------------------------------------------ */
/* Step figures                                                        */
/* ------------------------------------------------------------------ */

function PreferencesFigure() {
  return (
    <figure className="relative h-[488px] w-[666px] shrink-0">
      <div className="h-full overflow-hidden bg-[#c6c6c6]">
        <div className="-ml-[3px] flex h-full w-[667px] flex-col border-r border-[#989898]">
          <TitleBar title="System Preferences" forwardDim focused />
          <div className="relative flex flex-1 flex-col bg-[#ececec]">
            {PREFERENCES.map((row, r) => (
              <div
                key={r}
                className={
                  r % 2
                    ? "flex h-[112.300px] border-b-2 border-[#d6d6d6] bg-[#e4e4e4] pl-[5px] pt-[21.500px]"
                    : "flex h-[112.300px] border-b-2 border-[#d6d6d6] bg-[#ededed] pl-[5px] pt-[21.500px]"
                }
              >
                {row.map(({ icon: I, lines }) => (
                  <div key={lines[0]} className="flex w-[82px] flex-col items-center">
                    <I />
                    <div className={lines.length > 1 ? "mt-[5px] whitespace-nowrap text-center text-[12px] leading-[14px] tracking-[-0.008em] text-[#3c3c3c]" : "mt-[6px] whitespace-nowrap text-center text-[12px] leading-[14px] tracking-[-0.008em] text-[#3c3c3c]"}>
                      {lines.map((l) => (
                        <div key={l}>{l}</div>
                      ))}
                    </div>
                  </div>
                ))}
              </div>
            ))}
            <div className="absolute inset-0 bg-[radial-gradient(circle_45px_at_456px_390px,transparent_96%,rgba(0,0,0,.26)_100%)]" />
          </div>
        </div>
      </div>
      <div className="absolute left-[494.500px] top-[30.500px] z-10 h-[21.500px] w-[162.500px] bg-[#1a72da] pl-[7px] text-[12px] font-medium leading-[21px] tracking-[-0.010em] text-white shadow-[0_4px_8px_rgba(0,0,0,.35)]">Dictation</div>
      <Callout angle={0} side="left" className="left-[437.700px] top-[28px]">Type "voices"</Callout>
      <Callout angle={90} side="right" className="left-[445px] top-[341.700px]">Click "Accessibility"</Callout>
      <StepNumber n={1} className="left-[271.500px] top-[447.500px]" />
    </figure>
  );
}

function SelectSpeechFigure() {
  return (
    <figure className="relative ml-[64px] mt-[58px] h-[351px] w-[218px] shrink-0">
      <div className="h-full overflow-hidden bg-[#ececec]">
        <AccessibilityWindow variant="focused" pane="empty" chrome={false} footer={false} className="-ml-[9.700px] -mt-[43px]" />
      </div>
      <Callout angle={90} side="left" className="left-[185.700px] top-[179.700px]">Select "Speech"</Callout>
      <StepNumber n={2} className="left-[57.700px] top-[310.500px]" />
    </figure>
  );
}

function OpenListFigure() {
  return (
    <figure className="relative ml-[35px] mt-[167px] h-[133px] w-[592px] shrink-0">
      <div className="h-full overflow-hidden">
        <AccessibilityWindow variant="plain" pane="voice" chrome={false} footer={false} scrolled className="-ml-[8px] -mt-[48px]" />
      </div>
      <Callout angle={-90} side="left" className="left-[558.400px] top-[97.500px]">Click on the list</Callout>
      <StepNumber n={3} className="left-[244.500px] top-[103.300px]" />
    </figure>
  );
}

const VOICE_MENU: { group: string; items: [string, boolean][] }[] = [
  { group: "Spanish (Spain) — Female", items: [["Monica", true], ["Monica (Waiting to download)", false]] },
  { group: "Spanish (Spain) — Male", items: [["Jorge", true], ["Jorge (Waiting to download)", false]] },
  { group: "Swedish — Female", items: [["Alva", true], ["Alva (Waiting to download)", false], ["Klara (Waiting to download)", false]] },
  { group: "Swedish — Male", items: [["Oskar (Waiting to download)", false]] },
  { group: "Thai", items: [["Kanya", true], ["Kanya (Waiting to download)", false]] },
  { group: "Turkish — Female", items: [["Yelda", true], ["Yelda (Waiting to download)", false]] },
  { group: "Turkish — Male", items: [["Cem (Waiting to download)", false]] },
];

function VoiceMenuFigure() {
  return (
    <figure className="relative h-[461px] w-[474px] shrink-0">
      <div className="relative h-full overflow-hidden">
        <AccessibilityWindow variant="plain" pane="lower" chrome={false} sidebar={false} className="-ml-[225.500px] -mt-[269.500px] shadow-[0_22px_44px_4px_rgba(0,0,0,.55)]" />
        <div className="-ml-[100px] mt-[87px] h-[48px] w-[300px] border-y border-[#d0d0d0] bg-gradient-to-b from-white from-50% to-[#f3f3f3] to-50% shadow-[0_16px_28px_rgba(0,0,0,.28)]" />
        <div className="absolute left-[102px] top-[-11px] w-[258px] rounded-b-[6px] bg-[#efefef] pb-[4px] shadow-[0_0_0_.7px_#a9a9a9,0_4px_10px_rgba(0,0,0,.35)]">
          <div className="pt-[3px] tracking-[-0.014em]">
            {VOICE_MENU.map(({ group, items }) => (
              <React.Fragment key={group}>
                <div className="pl-[21.500px] leading-[18px] text-[#b2b2b2]">{group}</div>
                {items.map(([name, ready]) => (
                  <div key={name} className={ready ? "pl-[21.500px] leading-[18px] text-[#222]" : "pl-[21.500px] leading-[18px] text-[#b2b2b2]"}>
                    {name}
                  </div>
                ))}
                <div className="flex h-[12px] items-center">
                  <i className="h-[1.500px] w-full bg-[#dadada]" />
                </div>
              </React.Fragment>
            ))}
            <div className="bg-[#4a9bff] pl-[21.500px] leading-[18px] text-white">Customize...</div>
          </div>
        </div>
      </div>
      <Callout angle={135} side="right" className="left-[324.900px] top-[408.700px]">Select "Customise.."</Callout>
      <StepNumber n={4} className="left-[-61.500px] top-[179.500px]" />
    </figure>
  );
}

type VoiceRow = { header?: string; name?: string; note?: "download" | "upgrade" };

const VOICES: VoiceRow[] = [
  { header: "English (United Kingdom)" },
  { name: "Daniel" },
  { name: "Kate", note: "download" },
  { name: "Oliver", note: "download" },
  { name: "Serena", note: "download" },
  { header: "Arabic (Saudi Arabia)" },
  { name: "Maged", note: "upgrade" },
  { name: "Tarik", note: "download" },
  { header: "Chinese (China)" },
  { name: "Ting-Ting" },
  { header: "Chinese (Hong Kong)" },
  { name: "Sin-ji", note: "upgrade" },
  { header: "Chinese (Taiwan)" },
  { name: "Mei-jia" },
];

function VoiceSheet() {
  return (
    <div className="absolute left-[110px] top-[36px] z-10 flex h-[402px] w-[443.500px] flex-col bg-[#eeeeee] pl-[20px] pr-[20px] text-[#1a1a1a] shadow-[inset_0_5px_5px_-4px_rgba(0,0,0,.35),0_0_0_.5px_#a5a5a5,0_5px_14px_rgba(0,0,0,.45)]">
      <div className="mt-[20px] flex h-[21px] items-center">
        <span className="-mt-px">Select voices:</span>
        <div className="ml-auto mr-[4.500px] flex h-[20px] w-[169px] items-center justify-center gap-[5px] rounded-[3px] border border-[#c9c9c9] bg-white pr-[17px] text-[12px] text-[#ababab]">
          <Magnifier />
          Search
        </div>
      </div>
      <div className="mt-[9px] h-[281.500px] w-[403.500px] overflow-hidden border border-[#c4c4c4] bg-white text-black">
        {VOICES.map((v) =>
          v.header ? (
            <div key={v.header} className="h-[21px] border-b border-[#dedede] bg-[#f5f5f5] pl-[4px] leading-[21px] shadow-[0_-1px_0_#dedede]">{v.header}</div>
          ) : (
            <div key={v.name} className="flex h-[21px] items-center pb-[2px] pl-[6px] pr-[30.500px]">
              <Checkbox checked />
              <span className="ml-[6px]">{v.name}</span>
              {v.note && (
                <span className="ml-auto flex items-center gap-[5px] text-[11px] tracking-normal">
                  {v.note === "upgrade" && <Checkbox checked small />}
                  {v.note === "upgrade" ? "Upgrade to enhanced quality" : "Will be downloaded"}
                </span>
              )}
            </div>
          ),
        )}
      </div>
      <div className="mt-[6px] text-[11px] leading-[16px] tracking-normal">Selected download size: 23.2 GB</div>
      <div className="mt-[8.500px] flex">
        <Button className={`w-[68.500px] ${ENABLED}`}>Play</Button>
        <Button className={`ml-auto w-[68.500px] ${ENABLED}`}>Cancel</Button>
        <Button className="ml-[13.500px] w-[69px] bg-gradient-to-b from-[#6cb4fa] to-[#067aff] text-white shadow-[0_1px_1px_#8ab]">OK</Button>
      </div>
    </div>
  );
}

function SelectVoicesFigure() {
  return (
    <figure className="relative ml-[130px] h-[443px] w-[663px] shrink-0">
      <div className="relative h-full overflow-hidden border-b border-[#a5a5a5] bg-[#202225]">
        <AccessibilityWindow variant="inactive" pane="lower" title="Accessibility" className="-ml-[1px] -mt-[2px] shadow-[0_4px_0_#1d3346]" />
        <VoiceSheet />
      </div>
      <Callout angle={180} side="right" className="left-[241px] top-[144.700px]">Select voices</Callout>
      <StepNumber n={5} className="left-[601.700px] top-[169.300px]" />
    </figure>
  );
}

function InstallFigure() {
  return (
    <figure className="relative h-[429px] w-[664px] shrink-0">
      <div className="h-full overflow-hidden">
        <AccessibilityWindow variant="focused" pane="full" />
      </div>
      <Callout angle={135} side="right" className="left-[467px] top-[157.300px]">Wait...</Callout>
      <StepNumber n={6} className="left-[270.500px] top-[-61.700px]" />
    </figure>
  );
}

export default function App() {
  return (
    <main className="flex h-[1684px] w-[1615px] flex-col overflow-hidden bg-white font-['Inter','Liberation_Sans',sans-serif] text-[13px] leading-[18px] tracking-[-0.010em] antialiased">
      <Defs />
      <section className="flex h-[662px] items-start pl-5 pt-5">
        <PreferencesFigure />
        <SelectSpeechFigure />
        <OpenListFigure />
      </section>
      <section className="flex h-[543px] items-start pl-[192px]">
        <VoiceMenuFigure />
        <SelectVoicesFigure />
      </section>
      <section className="flex items-start pl-[476px]">
        <InstallFigure />
      </section>
    </main>
  );
}
